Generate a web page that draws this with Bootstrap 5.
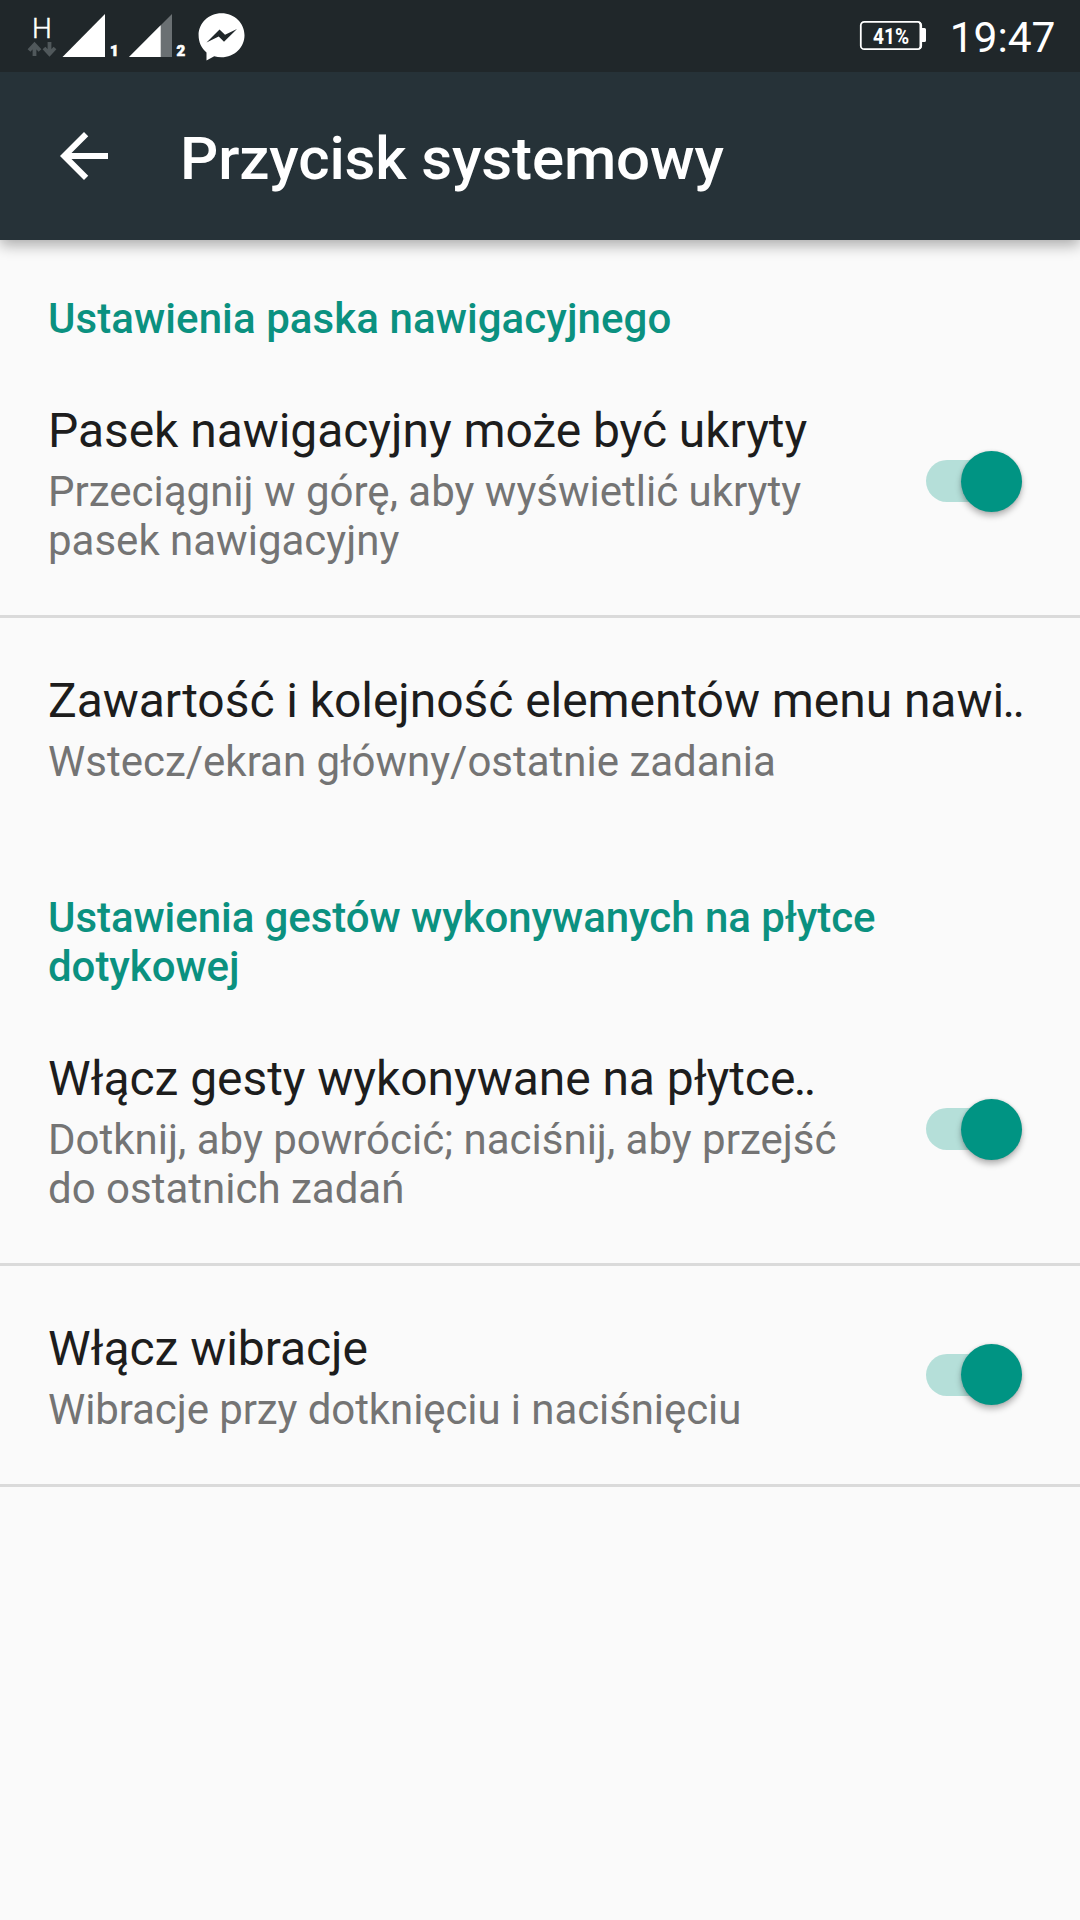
<!DOCTYPE html>
<html lang="pl">
<head>
<meta charset="utf-8">
<meta name="viewport" content="width=device-width, initial-scale=1">
<title>Przycisk systemowy</title>
<link href="https://cdn.jsdelivr.net/npm/bootstrap@5.3.0/dist/css/bootstrap.min.css" rel="stylesheet">
<style>
body{font-family:Roboto,"Noto Sans",sans-serif;background:#fafafa;color:#1d1d1d;min-height:1920px;overflow:hidden}
svg{display:block;flex:none}
svg text{font-family:Roboto,sans-serif;fill:#fff}
.statusbar{height:72px;background:#20272a}
.clock{font-size:42.5px;line-height:49px;padding:2px 24.500px 0 21.500px}
.appbar{height:168px;background:#263238;padding-left:48px;box-shadow:0 5px 14px 0 rgba(0,0,0,.33)}
.appbar h1{font-size:60px;line-height:70px;font-weight:500;margin:5px 0 0 60px;letter-spacing:-.12px}
.section-title{font-size:42px;line-height:49px;font-weight:500;color:#0b9180;margin:0;padding:54px 48px 5px;letter-spacing:.08px}
.section-title.snug{letter-spacing:-.06px}
.pref{padding:55px 58px 50px 48px;border-bottom:3px solid #dadada}
.pref.plain{border-color:transparent}
.pref-title{font-size:48px;line-height:56px;margin:0 0 8px;font-weight:400;white-space:nowrap;letter-spacing:-.06px}
.pref-dots{letter-spacing:-2.800px;margin-left:-1.500px}
.pref-note{font-size:42px;line-height:49px;color:#747474;margin:0}
.pref-note.snug{letter-spacing:-.09px}
.pref-text{width:820px}
.pref.plain .pref-text{width:100%}
.toggle{width:96px;height:42px;background:#b5dfd9;margin:0 0 6px auto}
.knob{width:61px;height:61px;flex:none;background:#009483;box-shadow:0 4px 6px rgba(0,0,0,.28),0 0 3px rgba(0,0,0,.12)}
</style>
</head>
<body>
<header>
  <div class="statusbar d-flex align-items-center justify-content-between text-white position-relative z-1">
    <svg width="270" height="72" viewBox="0 0 270 72">
      <text x="32" y="38" font-size="28" font-weight="300" stroke="#fff" stroke-width=".5">H</text>
      <path d="M34.500 56V45M29 50.500l5.500-6 5.500 6M49.500 42v11M44 48l5.500 6 5.500-6" fill="none" stroke="#50585b" stroke-width="3.800"/>
      <path d="M62.500 57L105 14v43z" fill="#fff"/>
      <text x="110" y="56" font-size="15" font-weight="900" stroke="#fff" stroke-width=".6">1</text>
      <path d="M129 57l43-43v43z" fill="#6a7073"/>
      <path d="M129 57l31.700-31.700V57z" fill="#fff"/>
      <text x="176.500" y="56" font-size="15" font-weight="900" stroke="#fff" stroke-width=".6">2</text>
      <path d="M221.500 13.300c13 0 23 9.800 23 22s-10 22-23 22c-2.600 0-5-.4-7.300-1.100L206.500 60.500v-8C201.500 48.500 198.600 42.200 198.600 35.300 198.600 23.100 208.500 13.300 221.500 13.300z" fill="#fff"/>
      <path d="M206.500 42.500l13-13 5.500 5.200 12-5.700-13 12.800-5.300-5.300z" fill="#20272a"/>
    </svg>
    <div class="d-flex align-items-center">
      <svg width="70" height="72" viewBox="858 0 70 72">
        <rect x="860.800" y="21.800" width="60.400" height="27.400" rx="3.500" fill="none" stroke="#fff" stroke-width="1.800"/>
        <path d="M918 21.500q3.500 0 3.500 3V28h3q1.500 0 1.500 1.500v11q0 1.500-1.500 1.500h-3v5q0 2.500-3.500 2.500l1.500-3v-22z" fill="#fff"/>
        <text x="873" y="44" font-size="21.500" font-weight="700" textLength="36" lengthAdjust="spacingAndGlyphs">41%</text>
      </svg>
      <span class="clock">19:47</span>
    </div>
  </div>
  <nav class="appbar d-flex align-items-center text-white position-relative">
    <svg width="72" height="72" viewBox="0 0 24 24" fill="#fff"><path d="M20 11H7.830l5.590-5.590L12 4l-8 8 8 8 1.410-1.410L7.830 13H20v-2z"/></svg>
    <h1>Przycisk systemowy</h1>
  </nav>
</header>
<main>
  <h2 class="section-title">Ustawienia paska nawigacyjnego</h2>
  <section class="pref d-flex align-items-center">
    <div class="pref-text">
      <h3 class="pref-title">Pasek nawigacyjny może być ukryty</h3>
      <p class="pref-note">Przeciągnij w górę, aby wyświetlić ukryty pasek nawigacyjny</p>
    </div>
    <div class="toggle rounded-pill d-flex align-items-center justify-content-end" role="switch" aria-checked="true"><span class="knob rounded-circle"></span></div>
  </section>
  <section class="pref plain">
    <div class="pref-text">
      <h3 class="pref-title">Zawartość i kolejność elementów menu nawi<span class="pref-dots">..</span></h3>
      <p class="pref-note">Wstecz/ekran główny/ostatnie zadania</p>
    </div>
  </section>
  <h2 class="section-title snug">Ustawienia gestów wykonywanych na płytce dotykowej</h2>
  <section class="pref d-flex align-items-center">
    <div class="pref-text">
      <h3 class="pref-title">Włącz gesty wykonywane na płytce<span class="pref-dots">..</span></h3>
      <p class="pref-note">Dotknij, aby powrócić; naciśnij, aby przejść do ostatnich zadań</p>
    </div>
    <div class="toggle rounded-pill d-flex align-items-center justify-content-end" role="switch" aria-checked="true"><span class="knob rounded-circle"></span></div>
  </section>
  <section class="pref d-flex align-items-center">
    <div class="pref-text">
      <h3 class="pref-title">Włącz wibracje</h3>
      <p class="pref-note snug">Wibracje przy dotknięciu i naciśnięciu</p>
    </div>
    <div class="toggle rounded-pill d-flex align-items-center justify-content-end" role="switch" aria-checked="true"><span class="knob rounded-circle"></span></div>
  </section>
</main>
<script src="https://cdn.jsdelivr.net/npm/bootstrap@5.3.0/dist/js/bootstrap.bundle.min.js"></script>
</body>
</html>
